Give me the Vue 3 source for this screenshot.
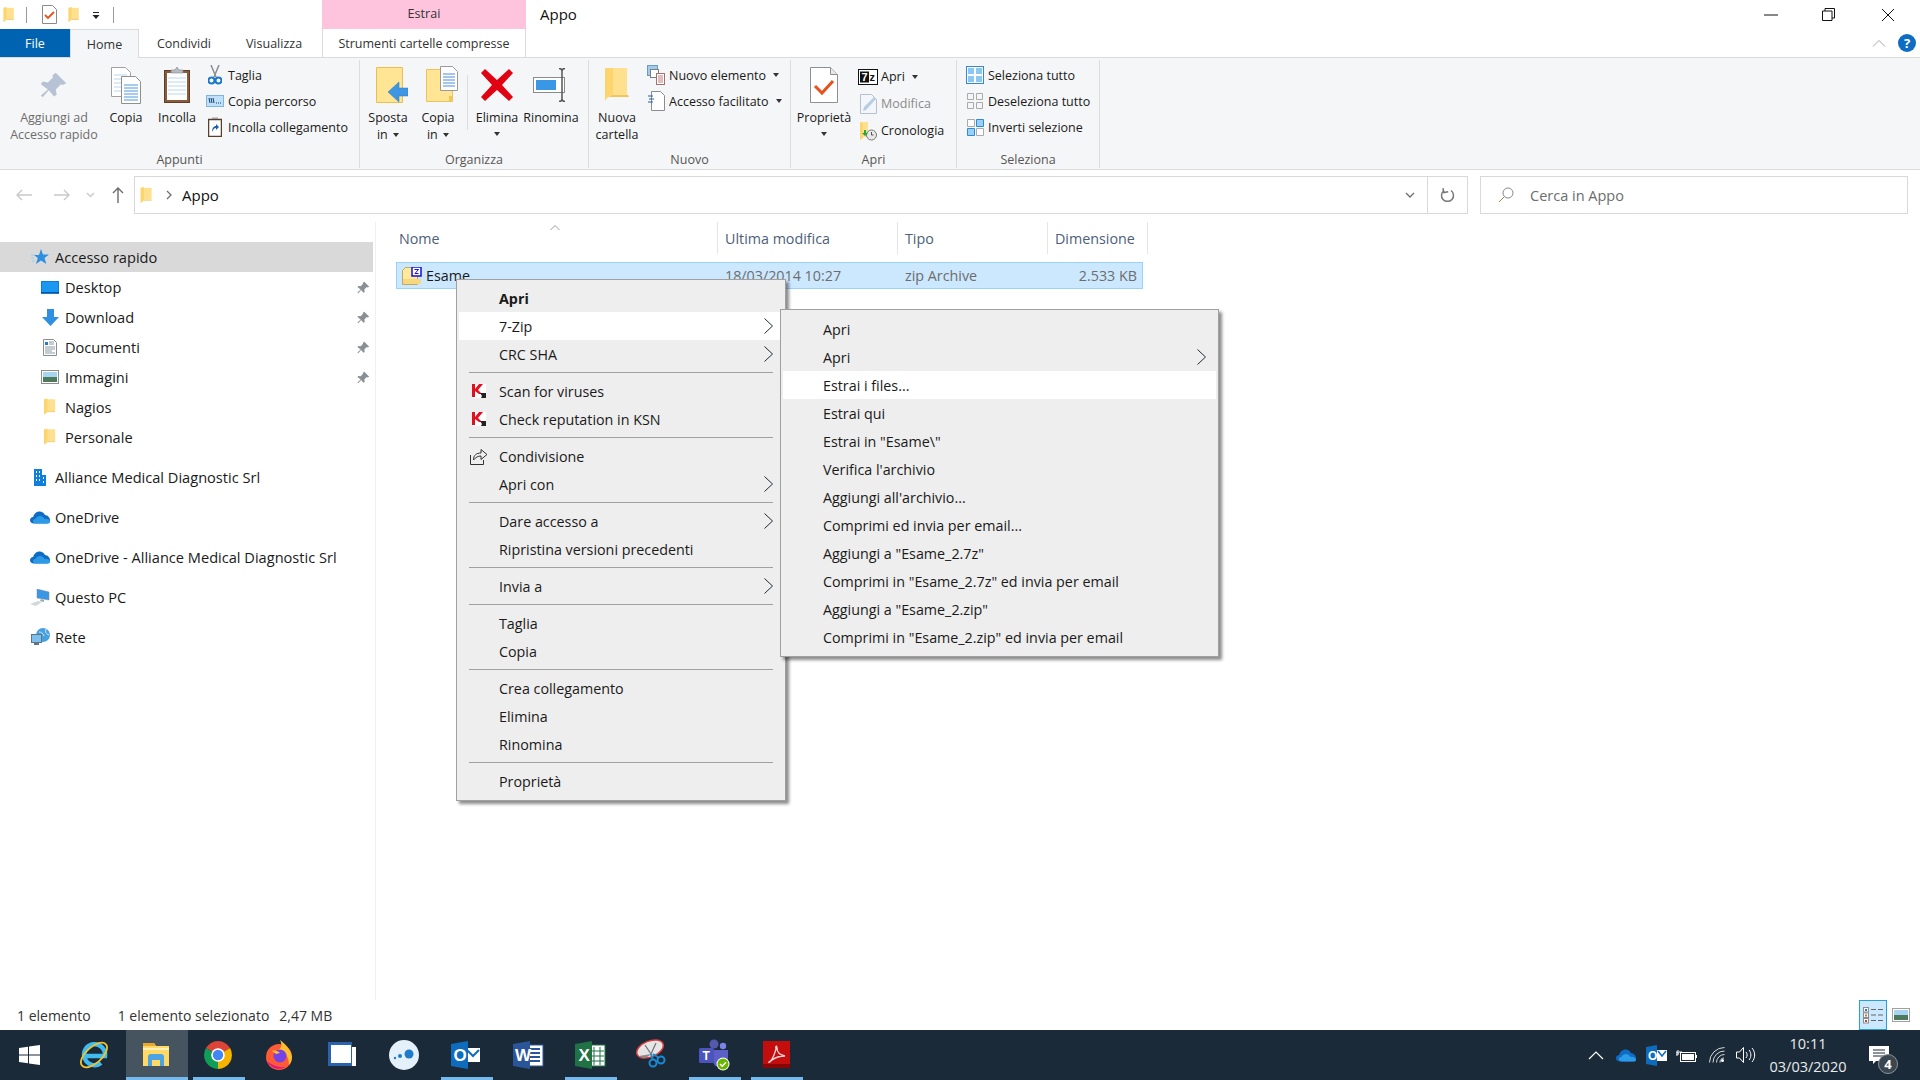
<template>
  <div class="page">
    <svg class="sprite" aria-hidden="true">
      <symbol id="i-folder" viewBox="0 0 14 20">
        <path d="M3 1h10v14H3z" fill="#ffe08f" />
        <path d="M0 1l4-1v16l-4 3z" fill="#fdd56e" />
        <path d="M4 16h9v-1H4z" fill="#f2c55c" />
      </symbol>
      <symbol id="i-pin" viewBox="0 0 16 16">
        <path d="M9 1l6 6-2 1-1-0.5-3 3 0.5 3-1.5 1-3-3.500-3.500 4-1-1 4-3.500L0.500 7.500l1-1.500 3 0.500 3-3L7 2.500z" fill="#8a8f96" />
      </symbol>
      <symbol id="i-chev" viewBox="0 0 9 16">
        <path d="M0.500 0.500L8.500 8L0.500 15.500" fill="none" stroke="#1f2a35" stroke-width="1" />
      </symbol>
      <symbol id="i-k" viewBox="0 0 14 14">
        <rect width="14" height="14" fill="#fff" />
        <path d="M0 0h3v5l4-5h4L6 6l4 4H7L3 7v6H0z" fill="#e2101e" />
        <path d="M8 9h6v5H9l1-2z" fill="#222" />
      </symbol>
      <symbol id="i-cloud" viewBox="0 0 20 13">
        <path d="M4 12.500C1.500 12.500 0 11 0 9.200 0 7.400 1.400 6 3.200 6 4 2.600 6.600 0.500 9.600 0.500c2.400 0 4.400 1.300 5.400 3.500C17.800 4.200 20 6.500 20 9.200c0 1.800-1.400 3.300-3.200 3.300z" fill="#0f6cc4" />
        <path d="M6 12.500c-2 0-3-1.200-3-2.400 0-1.400 1.100-2.400 2.600-2.400 0.900-1.700 2.500-2.700 4.300-2.700 2 0 3.700 1.100 4.500 2.900 2.500-0.300 5.600 0.800 5.600 2.900 0 0.900-0.600 1.700-1.600 1.700z" fill="#2b9be8" />
      </symbol>
      <symbol id="i-selgrid" viewBox="0 0 18 18">
        <rect x="0.500" y="0.500" width="17" height="17" fill="#fff" stroke="#2e8ad8" />
        <path d="M2 2h6v6H2zM10 2h6v6h-6zM2 10h6v6H2zM10 10h6v6h-6z" fill="#8cc7f3" />
      </symbol>
    </svg>

    <!-- title bar -->
    <header class="titlebar">
      <div class="qat">
        <svg class="qat-folder" width="12" height="16"><use href="#i-folder" /></svg>
        <span class="qat-sep"></span>
        <svg class="qat-doc" width="15" height="19" viewBox="0 0 15 19">
          <path d="M0.500 0.500h10l4 4v14H0.500z" fill="#fff" stroke="#8a8a8a" />
          <path d="M3 10l3 3 6-6" fill="none" stroke="#e8501c" stroke-width="1.800" />
        </svg>
        <svg class="qat-folder2" width="12" height="16"><use href="#i-folder" /></svg>
        <svg class="qat-drop" width="8" height="9" viewBox="0 0 8 9">
          <path d="M1 1h6v1H1zM0.500 4h7L4 8z" fill="#222" />
        </svg>
        <span class="qat-sep qat-sep-b"></span>
      </div>
      <div class="context-head">Estrai</div>
      <div class="win-title">Appo</div>
      <div class="win-controls">
        <button class="win-btn win-min">
          <svg width="14" height="2" viewBox="0 0 14 2"><path d="M0 1h14" stroke="#111" /></svg>
        </button>
        <button class="win-btn win-max">
          <svg width="13" height="13" viewBox="0 0 13 13">
            <path d="M3 3V0.500h9.500V10H10M0.500 3h9.500v9.500H0.500z" fill="none" stroke="#111" />
          </svg>
        </button>
        <button class="win-btn win-close">
          <svg width="14" height="14" viewBox="0 0 14 14"><path d="M1 1l12 12M13 1L1 13" stroke="#111" /></svg>
        </button>
      </div>
    </header>

    <!-- tabs -->
    <nav class="tabs">
      <div class="tab tab-file">File</div>
      <div class="tab tab-home">Home</div>
      <div class="tab tab-cond">Condividi</div>
      <div class="tab tab-vis">Visualizza</div>
      <div class="tab tab-tools">Strumenti cartelle compresse</div>
      <div class="tabs-right">
        <svg width="14" height="8" viewBox="0 0 14 8"><path d="M1 7.500l6-6 6 6" fill="none" stroke="#a6a6a6" /></svg>
        <span class="help">?</span>
      </div>
    </nav>

    <!-- ribbon -->
    <section class="ribbon">
      <div class="group group-appunti">
        <div class="group-body">
          <div class="big w-pin muted">
            <div class="big-icon">
              <svg width="28" height="28" viewBox="0 0 16 16"><path d="M9 1l6 6-2 1-1-0.500-3 3 0.500 3-1.500 1-3-3.500-3.500 4-1-1 4-3.500L0.500 7.500l1-1.500 3 0.500 3-3L7 2.500z" fill="#b7c3d4" /></svg>
            </div>
            <span>Aggiungi ad</span><span>Accesso rapido</span>
          </div>
          <div class="big w-copy">
            <div class="big-icon">
              <svg width="30" height="37" viewBox="0 0 30 37">
                <path d="M0.500 0.500h14l5 5v24H0.500z" fill="#fff" stroke="#a0a0a0" />
                <path d="M3 8h13M3 12h13M3 16h13M3 20h13M3 24h13" stroke="#b9d4f0" />
                <path d="M10.500 9.500h14l5 5v22h-19z" fill="#fff" stroke="#8f8f8f" />
                <path d="M13 18h14M13 21h14M13 24h14M13 27h14M13 30h14M13 33h14" stroke="#4d9ae0" />
              </svg>
            </div>
            <span>Copia</span>
          </div>
          <div class="big w-paste">
            <div class="big-icon">
              <svg width="26" height="36" viewBox="0 0 26 36">
                <rect x="0.500" y="3.500" width="25" height="32" fill="#8a5a3c" stroke="#5f3d28" />
                <rect x="3" y="6" width="20" height="27" fill="#fff" />
                <path d="M4 11h18M4 15h18M4 19h18M4 23h18M4 27h18" stroke="#bcd8f3" />
                <path d="M7 6V3h4l2-3 2 3h4v3z" fill="#b5bcc4" stroke="#7c8187" stroke-width="0.600" />
              </svg>
            </div>
            <span>Incolla</span>
          </div>
          <div class="small-col small-col-clip">
            <div class="small">
              <span class="s-icon">
                <svg width="14" height="20" viewBox="0 0 14 20">
                  <path d="M3 0l5 12M11 0L6 12" stroke="#8d8d8d" stroke-width="1.500" />
                  <circle cx="3.500" cy="15.500" r="3" fill="none" stroke="#1978c8" stroke-width="2" />
                  <circle cx="10.500" cy="15.500" r="3" fill="none" stroke="#1978c8" stroke-width="2" />
                </svg>
              </span>Taglia
            </div>
            <div class="small">
              <span class="s-icon">
                <svg width="18" height="12" viewBox="0 0 18 12">
                  <rect x="0.500" y="0.500" width="17" height="11" fill="#bfe0f8" stroke="#7fb5de" />
                  <path d="M3 3l1 5M5 3l1 5M7 3l1 5M10 8h1M12 8h1M14 8h1" stroke="#13406a" />
                </svg>
              </span>Copia percorso
            </div>
            <div class="small">
              <span class="s-icon">
                <svg width="14" height="20" viewBox="0 0 14 20">
                  <rect x="0.500" y="2.500" width="13" height="17" fill="#fff" stroke="#5a3e2c" stroke-width="1.500" />
                  <path d="M4 2V0.500h6V2z" fill="#9aa0a6" />
                  <path d="M4 15c0-4 2-6 4-6V7l3 3-3 3v-2c-2 0-3 2-4 4z" fill="#1e5fa8" />
                </svg>
              </span>Incolla collegamento
            </div>
          </div>
        </div>
        <div class="group-label">Appunti</div>
      </div>

      <div class="group group-org">
        <div class="group-body">
          <div class="big w-sposta">
            <div class="big-icon nudge">
              <svg width="32" height="36" viewBox="0 0 32 36">
                <path d="M0.500 0.500h26v35H0.500z" fill="#ffe594" stroke="#e9bf50" />
                <path d="M12 25L23 15v6h9v8h-9v6z" fill="#3f97e3" stroke="#2a78c0" stroke-width="0.500" />
              </svg>
            </div>
            <span>Sposta</span><span>in <i class="caret"></i></span>
          </div>
          <div class="big w-copyto">
            <div class="big-icon nudge">
              <svg width="33" height="38" viewBox="0 0 33 38">
                <path d="M0.500 3.500h26v32H0.500z" fill="#ffe594" stroke="#eac35c" />
                <path d="M23 30v6l4-2v-4z" fill="#f2c55c" />
                <path d="M14.500 0.500h12l5 5v19h-17z" fill="#fff" stroke="#9a9a9a" />
                <path d="M17 8h12M17 11h12M17 14h12M17 17h12M17 20h12" stroke="#4d8fd8" />
              </svg>
            </div>
            <span>Copia</span><span>in <i class="caret"></i></span>
          </div>
          <span class="vsep"></span>
          <div class="big w-del">
            <div class="big-icon">
              <svg width="32" height="32" viewBox="0 0 32 32">
                <path d="M4 0l12 11L28 0l4 4-11 12 11 12-4 4-12-11L4 32l-4-4 11-12L0 4z" fill="#e00412" />
              </svg>
            </div>
            <span>Elimina</span><i class="caret caret-solo"></i>
          </div>
          <div class="big w-ren">
            <div class="big-icon">
              <svg width="36" height="34" viewBox="0 0 36 34">
                <rect x="0.500" y="9.500" width="31" height="15" fill="#fff" stroke="#8a8a8a" />
                <rect x="3" y="12" width="20" height="10" fill="#3a97e6" />
                <path d="M26 0.500c2 0 3 1 3 2.500v28c0 1.500-1 2.500-3 2.500M32 0.500c-2 0-3 1-3 2.500v28c0 1.500 1 2.500 3 2.500" fill="none" stroke="#555" stroke-width="1.500" />
              </svg>
            </div>
            <span>Rinomina</span>
          </div>
        </div>
        <div class="group-label">Organizza</div>
      </div>

      <div class="group group-new">
        <div class="group-body">
          <div class="big w-newf">
            <div class="big-icon">
              <svg width="24" height="36" viewBox="0 0 24 36">
                <path d="M5 1h17v29H5z" fill="#ffe08f" />
                <path d="M0 1l8 0v27l-6 3-2 3z" fill="#fdd56e" />
                <path d="M8 28h15l1 2H4z" fill="#f2c55c" />
              </svg>
            </div>
            <span>Nuova</span><span>cartella</span>
          </div>
          <div class="small-col small-col-new">
            <div class="small">
              <span class="s-icon">
                <svg width="18" height="20" viewBox="0 0 18 20">
                  <rect x="0.500" y="0.500" width="10" height="10" fill="#9ecbee" stroke="#6f99bd" />
                  <rect x="3.500" y="4.500" width="8" height="8" fill="#fff" stroke="#7e7e7e" />
                  <rect x="9.500" y="8.500" width="8" height="11" fill="#fff" stroke="#a27070" />
                  <path d="M11 11h5M11 13h5M11 15h5M11 17h5" stroke="#c77a7a" />
                </svg>
              </span>Nuovo elemento <i class="caret caret-side"></i>
            </div>
            <div class="small">
              <span class="s-icon">
                <svg width="17" height="20" viewBox="0 0 17 20">
                  <path d="M3.500 0.500h9l4 4v15h-13z" fill="#fff" stroke="#8d8d8d" />
                  <path d="M0 5h5M1 8h5M0 11h5" stroke="#1e62b0" />
                </svg>
              </span>Accesso facilitato <i class="caret caret-side"></i>
            </div>
          </div>
        </div>
        <div class="group-label">Nuovo</div>
      </div>

      <div class="group group-open">
        <div class="group-body">
          <div class="big w-prop">
            <div class="big-icon">
              <svg width="28" height="36" viewBox="0 0 28 36">
                <path d="M0.500 0.500h20l7 7v28h-27z" fill="#fff" stroke="#8f8f8f" />
                <path d="M20.500 0.500v7h7" fill="#e8e8e8" stroke="#8f8f8f" />
                <path d="M5 19l7 7 11-12" fill="none" stroke="#e8501c" stroke-width="3" />
              </svg>
            </div>
            <span>Proprietà</span><i class="caret caret-solo"></i>
          </div>
          <div class="small-col small-col-wide">
            <div class="small">
              <span class="s-icon">
                <svg width="20" height="16" viewBox="0 0 20 16">
                  <rect x="0.500" y="0.500" width="19" height="15" fill="#fff" stroke="#111" />
                  <rect x="2" y="2.500" width="9" height="11" fill="#111" />
                  <text x="3.500" y="11.500" class="svg-7z" fill="#fff">7</text>
                  <text x="11.500" y="12" class="svg-7z" fill="#111">z</text>
                </svg>
              </span>Apri <i class="caret caret-side"></i>
            </div>
            <div class="small muted">
              <span class="s-icon">
                <svg width="17" height="20" viewBox="0 0 17 20">
                  <path d="M0.500 0.500h11l5 5v14H0.500z" fill="#f3f6fa" stroke="#b7c0cc" />
                  <path d="M3 17l1-4L14 3l2 2L6 16z" fill="#b7cde6" />
                </svg>
              </span>Modifica
            </div>
            <div class="small">
              <span class="s-icon">
                <svg width="17" height="20" viewBox="0 0 17 20">
                  <path d="M0 1h8v15H0z" fill="#ffe08f" />
                  <path d="M0 1l3 1v15l-3 2z" fill="#fdd56e" />
                  <circle cx="11.500" cy="14" r="5" fill="#e8e8e8" stroke="#777" />
                  <path d="M11.500 11v3h2" fill="none" stroke="#555" />
                  <path d="M2 12l3 3 3-3H6V9H4v3z" fill="#25a83a" />
                </svg>
              </span>Cronologia
            </div>
          </div>
        </div>
        <div class="group-label">Apri</div>
      </div>

      <div class="group group-sel">
        <div class="group-body">
          <div class="small-col">
            <div class="small">
              <span class="s-icon"><svg width="18" height="18"><use href="#i-selgrid" /></svg></span>Seleziona tutto
            </div>
            <div class="small">
              <span class="s-icon">
                <svg width="16" height="16" viewBox="0 0 16 16">
                  <path d="M0.500 0.500h6v6h-6zM9.500 0.500h6v6h-6zM0.500 9.500h6v6h-6zM9.500 9.500h6v6h-6z" fill="none" stroke="#aaa" />
                </svg>
              </span>Deseleziona tutto
            </div>
            <div class="small">
              <span class="s-icon">
                <svg width="17" height="17" viewBox="0 0 17 17">
                  <path d="M0.500 0.500h7v7h-7zM9.500 9.500h7v7h-7z" fill="#fff" stroke="#aaa" />
                  <path d="M9.500 0.500h7v7h-7zM0.500 9.500h7v7h-7z" fill="#9bd0f5" stroke="#2e8ad8" />
                </svg>
              </span>Inverti selezione
            </div>
          </div>
        </div>
        <div class="group-label">Seleziona</div>
      </div>
    </section>

    <!-- address bar -->
    <div class="addressrow">
      <div class="nav-btns">
        <svg class="n-back" width="16" height="12" viewBox="0 0 16 12"><path d="M6 1L1 6l5 5M1 6h15" fill="none" stroke="#c9c9c9" stroke-width="1.400" /></svg>
        <svg class="n-fwd" width="16" height="12" viewBox="0 0 16 12"><path d="M10 1l5 5-5 5M15 6H0" fill="none" stroke="#c9c9c9" stroke-width="1.400" /></svg>
        <svg class="n-down" width="9" height="6" viewBox="0 0 9 6"><path d="M1 1l3.500 3.500L8 1" fill="none" stroke="#c9c9c9" stroke-width="1.400" /></svg>
        <svg class="n-up" width="12" height="16" viewBox="0 0 12 16"><path d="M1 6l5-5 5 5M6 1v15" fill="none" stroke="#6b6b6b" stroke-width="1.400" /></svg>
      </div>
      <div class="addressbox">
        <svg class="addr-folder" width="13" height="17"><use href="#i-folder" /></svg>
        <svg class="addr-chev" width="6" height="10" viewBox="0 0 6 10"><path d="M1 1l4 4-4 4" fill="none" stroke="#6e6e6e" stroke-width="1.300" /></svg>
        <span class="addr-text">Appo</span>
        <svg class="addr-drop" width="10" height="6" viewBox="0 0 10 6"><path d="M1 1l4 4 4-4" fill="none" stroke="#6e6e6e" stroke-width="1.300" /></svg>
        <span class="addr-refresh">
          <svg width="15" height="15" viewBox="0 0 15 15">
            <path d="M4 2.500A6 6 0 1 0 11 2.500" fill="none" stroke="#777" stroke-width="1.500" />
            <path d="M3.500 0v4.500H8" fill="none" stroke="#777" stroke-width="1.500" transform="rotate(-10 4 3)" />
          </svg>
        </span>
      </div>
      <div class="searchbox">
        <svg width="16" height="16" viewBox="0 0 16 16">
          <circle cx="10" cy="6" r="5" fill="none" stroke="#8a8a8a" />
          <path d="M6.500 9.500L1 15" stroke="#b57a4a" />
        </svg>
        <span>Cerca in Appo</span>
      </div>
    </div>

    <!-- main -->
    <main class="main">
      <aside class="sidebar">
        <div
          v-for="item in navItems"
          :key="item.label"
          class="nav-row"
          :class="{ 'nav-sel': item.selected, 'nav-sub': item.sub, 'nav-gap': item.gap }"
        >
          <span class="nav-icon">
            <svg v-if="item.icon === 'star'" width="18" height="16" viewBox="0 0 18 16">
              <path d="M10 0l2 5.500h6l-4.500 3.500 1.800 6L10 11.500 5 15l1.800-6L3 6h5z" fill="#2c8fe0" />
              <path d="M0 6h4M0 9h3M1 12h3" stroke="#9fcdf0" />
            </svg>
            <svg v-else-if="item.icon === 'desktop'" width="18" height="13" viewBox="0 0 18 13">
              <rect width="18" height="13" fill="#0f7fdc" />
              <path d="M1 1h16v10H1z" fill="#1a97f0" />
              <path d="M0 11.500h18" stroke="#0a4f96" />
            </svg>
            <svg v-else-if="item.icon === 'download'" width="17" height="17" viewBox="0 0 17 17">
              <path d="M5 0h7v8h5l-8.500 9L0 8h5z" fill="#2f8fe0" />
            </svg>
            <svg v-else-if="item.icon === 'doc'" width="14" height="17" viewBox="0 0 14 17">
              <path d="M0.500 0.500h10l3 3v13H0.500z" fill="#fff" stroke="#8d8d8d" />
              <path d="M2 3h3v3H2z" fill="#2a78c8" />
              <path d="M6 3h5M6 5h5M2 8h10M2 10h10M2 12h7M2 14h10" stroke="#8899aa" />
            </svg>
            <svg v-else-if="item.icon === 'image'" width="18" height="14" viewBox="0 0 18 14">
              <rect x="0.500" y="0.500" width="17" height="13" fill="#fff" stroke="#8d8d8d" />
              <rect x="2" y="2" width="14" height="5" fill="#a6d4f2" />
              <rect x="2" y="7" width="14" height="5" fill="#4d7a5a" />
            </svg>
            <svg v-else-if="item.icon === 'folder'" width="12" height="18"><use href="#i-folder" /></svg>
            <svg v-else-if="item.icon === 'building'" width="12" height="17" viewBox="0 0 12 17">
              <path d="M0 0h8v17H0zM8 6h4v11H8z" fill="#0f7fdc" />
              <path d="M2 2h1v2H2zM5 2h1v2H5zM2 6h1v2H2zM5 6h1v2H5zM2 10h1v2H2zM5 10h1v2H5zM9 8h1v2H9zM9 12h1v2H9z" fill="#fff" />
            </svg>
            <svg v-else-if="item.icon === 'cloud'" width="20" height="13"><use href="#i-cloud" /></svg>
            <svg v-else-if="item.icon === 'pc'" width="20" height="17" viewBox="0 0 20 17">
              <path d="M7 0l12 3v8L7 9z" fill="#3a97e6" stroke="#7a8a99" stroke-width="0.500" />
              <path d="M11 10l-1 2 4 1v-2z" fill="#9aa" />
              <path d="M0 15l8-3 4 1-6 4z" fill="#d4d7da" />
            </svg>
            <svg v-else-if="item.icon === 'net'" width="19" height="18" viewBox="0 0 19 18">
              <circle cx="12" cy="7" r="7" fill="#49a0e0" />
              <path d="M8 4c2 0 4 1 5 4M15 1c-1 3 0 5 3 6" fill="none" stroke="#cfe8fa" />
              <rect x="0.500" y="6.500" width="10" height="8" fill="#7cc0ee" stroke="#5f7587" />
              <path d="M3 16h5" stroke="#5f7587" stroke-width="2" />
            </svg>
          </span>
          <span class="nav-label">{{ item.label }}</span>
          <svg v-if="item.pinned" class="nav-pin" width="13" height="13"><use href="#i-pin" /></svg>
        </div>
      </aside>

      <div class="pane">
        <svg class="sort-caret" width="10" height="5" viewBox="0 0 10 5"><path d="M0.500 5L5 0.500 9.500 5" fill="none" stroke="#9a9a9a" /></svg>
        <div class="col-head">
          <div class="col col-name">Nome</div>
          <div class="col col-date">Ultima modifica</div>
          <div class="col col-type">Tipo</div>
          <div class="col col-size">Dimensione</div>
        </div>
        <div class="file-row">
          <div class="cell-name">
            <svg width="20" height="18" viewBox="0 0 20 18">
              <path d="M0.500 3.500l3-3h12v17H0.500z" fill="#ffe99a" stroke="#b9a96a" />
              <path d="M1 12h18v5H1z" fill="#f9d77e" />
              <rect x="10" y="0" width="9" height="9" fill="#fff" stroke="#1111dd" stroke-width="1.500" />
              <path d="M12.500 2.500h4L13 6.500h3.500" fill="none" stroke="#1111dd" />
            </svg>
            <span>Esame</span>
          </div>
          <div class="cell cell-date">18/03/2014 10:27</div>
          <div class="cell cell-type">zip Archive</div>
          <div class="cell cell-size">2.533 KB</div>
        </div>
      </div>
    </main>

    <!-- status bar -->
    <footer class="status">
      <span class="st st-count">1 elemento</span>
      <span class="st st-sel">1 elemento selezionato</span>
      <span class="st st-mb">2,47 MB</span>
      <div class="view-btns">
        <span class="view-btn view-on">
          <svg width="21" height="17" viewBox="0 0 21 17">
            <rect x="0.500" y="0.500" width="5" height="4.500" fill="#fff" stroke="#8d8d8d" />
            <rect x="0.500" y="6" width="5" height="4.500" fill="#fff" stroke="#8d8d8d" />
            <rect x="0.500" y="11.500" width="5" height="4.500" fill="#fff" stroke="#8d8d8d" />
            <path d="M2 2h2v2H2z" fill="#2a78c8" /><path d="M2 7.500h2v2H2z" fill="#9a8a2a" /><path d="M2 13h2v2H2z" fill="#b84a2a" />
            <path d="M8 2.500h5M15 2.500h5M8 8h5M15 8h5M8 13.500h5M15 13.500h5" stroke="#666" />
          </svg>
        </span>
        <span class="view-btn">
          <svg width="18" height="14" viewBox="0 0 18 14">
            <rect x="0.500" y="0.500" width="17" height="13" fill="#fff" stroke="#a0a0a0" />
            <rect x="2" y="2" width="14" height="5" fill="#a6d4f2" />
            <rect x="2" y="7" width="14" height="5" fill="#4d7a5a" />
          </svg>
        </span>
      </div>
    </footer>

    <!-- taskbar -->
    <div class="taskbar">
      <div class="start">
        <svg width="21" height="20" viewBox="0 0 21 20">
          <path d="M0 3l9-1.300V9.500H0zM10 1.500L21 0v9.500H10zM0 10.500h9v7.800L0 17zM10 10.500h11V20l-11-1.500z" fill="#fff" />
        </svg>
      </div>
      <div
        v-for="app in apps"
        :key="app.id"
        class="task-btn"
        :class="{ 'task-on': app.running, 'task-active': app.active }"
      >
        <svg width="32" height="32" viewBox="0 0 32 32">
          <template v-if="app.id === 'ie'">
            <path d="M5 17h22A10.500 10.500 0 1 0 23 24" fill="none" stroke="#3fbcef" stroke-width="4.500" />
            <ellipse cx="16" cy="16" rx="16" ry="8" fill="none" stroke="#f2c230" stroke-width="1.800" transform="rotate(-42 16 16)" />
          </template>
          <template v-else-if="app.id === 'explorer'">
            <path d="M3 4h11l2 3h13v20H3z" fill="#ffd966" />
            <path d="M3 4h11l2 3H3z" fill="#e8a92e" />
            <path d="M3 9h26v2H3z" fill="#fff0b8" />
            <path d="M8 27V18a3 3 0 0 1 3-3h10a3 3 0 0 1 3 3v9h-4v-6h-8v6z" fill="#4ba3e3" />
          </template>
          <template v-else-if="app.id === 'chrome'">
            <path d="M16 16L3.900 9A14 14 0 0 1 28.100 9z" fill="#db4437" />
            <path d="M16 16L28.100 9A14 14 0 0 1 16 30z" fill="#f4b400" />
            <path d="M16 16L16 30A14 14 0 0 1 3.900 9z" fill="#0f9d58" />
            <circle cx="16" cy="16" r="6.800" fill="#fff" />
            <circle cx="16" cy="16" r="5.200" fill="#4285f4" />
          </template>
          <template v-else-if="app.id === 'firefox'">
            <circle cx="15" cy="18" r="13" fill="#ff5a35" />
            <path d="M16 1c5 4 11 9 12 17 0 4-2 7-3 8 0-9-5-14-11-15 4-2 4-6 2-10z" fill="#ffbd2e" />
            <path d="M3 22c3 7 12 10 19 6-4 1-12 0-19-6z" fill="#e31587" />
            <circle cx="16" cy="17" r="6.500" fill="#7542e5" />
            <path d="M8 12c3-1 6 0 8 2l-4 1z" fill="#ffbd2e" />
          </template>
          <template v-else-if="app.id === 'vm'">
            <path d="M2 3h24v5h4v19H2z" fill="#fff" />
            <path d="M2 3h24v24H2z" fill="#2a62ad" />
            <path d="M26 8h4v19h-4z" fill="#fff" />
            <rect x="5" y="6" width="20" height="18" fill="#fff" />
          </template>
          <template v-else-if="app.id === 'circle'">
            <circle cx="16" cy="16" r="15" fill="#e4f1fa" />
            <circle cx="21" cy="15" r="4.500" fill="#1e7cc8" />
            <circle cx="12" cy="17" r="2" fill="#1e7cc8" />
            <circle cx="7" cy="19" r="1.200" fill="#1e7cc8" />
          </template>
          <template v-else-if="app.id === 'outlook'">
            <path d="M15 9h15v14H15z" fill="#fff" />
            <path d="M17 11l6 6 6-6" fill="none" stroke="#0f6cbd" stroke-width="2" />
            <path d="M1 5l17-3v28L1 27z" fill="#0f6cbd" />
            <text x="3.500" y="22" class="svg-app">O</text>
          </template>
          <template v-else-if="app.id === 'word'">
            <rect x="14" y="6" width="17" height="21" fill="#fff" stroke="#2a5699" />
            <path d="M18 10h10M18 14h10M18 18h10M18 22h10" stroke="#2a5699" stroke-width="2" />
            <path d="M1 5l17-3v28L1 27z" fill="#2a5699" />
            <text x="3" y="22" class="svg-app">W</text>
          </template>
          <template v-else-if="app.id === 'excel'">
            <rect x="14" y="6" width="17" height="21" fill="#fff" stroke="#207245" />
            <path d="M20 8v18M26 8v18M16 12h14M16 17h14M16 22h14" stroke="#207245" />
            <path d="M1 5l17-3v28L1 27z" fill="#207245" />
            <text x="4.500" y="22" class="svg-app">X</text>
          </template>
          <template v-else-if="app.id === 'snip'">
            <ellipse cx="14" cy="10" rx="14" ry="8" fill="#e6e6e6" stroke="#d83b3b" stroke-width="1.500" transform="rotate(-22 14 10)" />
            <path d="M9 6l6 9M20 4L15 15" stroke="#777" stroke-width="1.300" />
            <path d="M3 17c3 3 9 2 12-2" fill="#8a8a8a" />
            <circle cx="17" cy="24" r="3.500" fill="none" stroke="#1a8ad4" stroke-width="2" />
            <circle cx="25" cy="21" r="3.500" fill="none" stroke="#1a8ad4" stroke-width="2" />
            <path d="M15 15l2 6M17 15l6 4" stroke="#1a8ad4" stroke-width="2" />
          </template>
          <template v-else-if="app.id === 'teams'">
            <circle cx="16" cy="5" r="4.500" fill="#5558af" />
            <circle cx="25" cy="7" r="3.200" fill="#7b83eb" />
            <path d="M15 11h15v11a6 6 0 0 1-6 6h-3a6 6 0 0 1-6-6z" fill="#5b5fc7" />
            <rect x="1" y="9" width="15" height="15" rx="1.500" fill="#4b53bc" />
            <text x="4.500" y="21" class="svg-team">T</text>
            <circle cx="25" cy="25" r="6.500" fill="#fff" />
            <circle cx="25" cy="25" r="5.500" fill="#6bb700" />
            <path d="M22 25l2.200 2.200 3.800-4" fill="none" stroke="#fff" stroke-width="1.500" />
          </template>
          <template v-else-if="app.id === 'acrobat'">
            <rect x="3" y="2" width="27" height="27" fill="#c40d0d" />
            <path d="M3 25h27v4H3z" fill="#8a0505" />
            <path d="M9 23c3-1 5-6 7-13-1-3 1-4 1-1 0 4 3 7 8 8-4 0-9 1-13 4-2 2-4 3-3 2z" fill="none" stroke="#f3d6d6" stroke-width="1.300" />
          </template>
        </svg>
      </div>

      <div class="tray">
        <svg class="tr-chev" width="16" height="9" viewBox="0 0 16 9"><path d="M1 8l7-7 7 7" fill="none" stroke="#fff" stroke-width="1.200" /></svg>
        <svg class="tr-cloud" width="20" height="13"><use href="#i-cloud" /></svg>
        <svg class="tr-ol" width="21" height="21" viewBox="0 0 21 21">
          <path d="M11 5h10v11H11z" fill="#fff" />
          <path d="M12 6l4 5 4-5" fill="none" stroke="#0f6cbd" stroke-width="1.500" />
          <path d="M0 2l11-2v21L0 19z" fill="#0f6cbd" />
          <text x="2" y="14.500" class="svg-tray">O</text>
        </svg>
        <svg class="tr-bat" width="21" height="13" viewBox="0 0 21 13">
          <path d="M0 3h2v3H0zM2 1v4M3 3h3" stroke="#fff" fill="none" />
          <rect x="4.500" y="3.500" width="15" height="9" fill="none" stroke="#fff" />
          <rect x="6" y="5" width="12" height="6" fill="#fff" />
          <rect x="20" y="6" width="1" height="3" fill="#fff" />
        </svg>
        <svg class="tr-wifi" width="16" height="16" viewBox="0 0 16 16">
          <path d="M0.500 15.500A15 15 0 0 1 15.500 0.500M4 15.500A11.500 11.500 0 0 1 15.500 4M7.500 15.500A8 8 0 0 1 15.500 7.500M11 15.500A4.500 4.500 0 0 1 15 11" fill="none" stroke="#d6d9dc" />
          <circle cx="13.500" cy="13.500" r="1.500" fill="#fff" />
        </svg>
        <svg class="tr-vol" width="21" height="16" viewBox="0 0 21 16">
          <path d="M0.500 5h3l4-4.500v15l-4-4.500h-3z" fill="none" stroke="#fff" />
          <path d="M10 5c1.500 2 1.500 4 0 6M13 3c2.500 3 2.500 7 0 10M16 1c3.500 4 3.500 10 0 14" fill="none" stroke="#fff" />
        </svg>
        <div class="clock">
          <span>10:11</span>
          <span>03/03/2020</span>
        </div>
        <div class="notif">
          <svg width="20" height="18" viewBox="0 0 20 18">
            <path d="M0 0h20v15H7l-3 3v-3H0z" fill="#fff" />
            <path d="M4 4h12M4 7h12M4 10h12" stroke="#1b2a38" />
          </svg>
          <span class="notif-badge">4</span>
        </div>
      </div>
    </div>

    <!-- context menu -->
    <div class="menu menu-main">
      <template v-for="(item, i) in mainMenu" :key="i">
        <div v-if="item.sep" class="menu-sep"></div>
        <div v-else class="menu-item" :class="{ 'menu-bold': item.bold, 'menu-hot': item.hot }">
          <span class="menu-icon">
            <svg v-if="item.icon === 'k'" width="14" height="14"><use href="#i-k" /></svg>
            <svg v-else-if="item.icon === 'share'" width="18" height="17" viewBox="0 0 18 17">
              <path d="M0.500 7v9.500h13V12" fill="none" stroke="#333" />
              <path d="M3.500 12c0-5 3-7 7.500-7V1.500l6 5-6 5V8c-3 0-5 1-7.500 4z" fill="none" stroke="#333" />
            </svg>
          </span>
          <span class="menu-text">{{ item.label }}</span>
          <svg v-if="item.sub" class="menu-chev" width="9" height="16"><use href="#i-chev" /></svg>
        </div>
      </template>
    </div>

    <div class="menu menu-zip">
      <div v-for="(item, i) in zipMenu" :key="i" class="menu-item" :class="{ 'menu-hot': item.hot }">
        <span class="menu-icon"></span>
        <span class="menu-text">{{ item.label }}</span>
        <svg v-if="item.sub" class="menu-chev" width="9" height="16"><use href="#i-chev" /></svg>
      </div>
    </div>
  </div>
</template>

<script setup>
const navItems = [
  { label: 'Accesso rapido', icon: 'star', selected: true },
  { label: 'Desktop', icon: 'desktop', sub: true, pinned: true },
  { label: 'Download', icon: 'download', sub: true, pinned: true },
  { label: 'Documenti', icon: 'doc', sub: true, pinned: true },
  { label: 'Immagini', icon: 'image', sub: true, pinned: true },
  { label: 'Nagios', icon: 'folder', sub: true },
  { label: 'Personale', icon: 'folder', sub: true },
  { label: 'Alliance Medical Diagnostic Srl', icon: 'building', gap: true },
  { label: 'OneDrive', icon: 'cloud', gap: true },
  { label: 'OneDrive - Alliance Medical Diagnostic Srl', icon: 'cloud', gap: true },
  { label: 'Questo PC', icon: 'pc', gap: true },
  { label: 'Rete', icon: 'net', gap: true },
]

const apps = [
  { id: 'ie' },
  { id: 'explorer', running: true, active: true },
  { id: 'chrome', running: true },
  { id: 'firefox' },
  { id: 'vm' },
  { id: 'circle' },
  { id: 'outlook', running: true },
  { id: 'word' },
  { id: 'excel', running: true },
  { id: 'snip' },
  { id: 'teams', running: true },
  { id: 'acrobat', running: true },
]

const mainMenu = [
  { label: 'Apri', bold: true },
  { label: '7-Zip', sub: true, hot: true },
  { label: 'CRC SHA', sub: true },
  { sep: true },
  { label: 'Scan for viruses', icon: 'k' },
  { label: 'Check reputation in KSN', icon: 'k' },
  { sep: true },
  { label: 'Condivisione', icon: 'share' },
  { label: 'Apri con', sub: true },
  { sep: true },
  { label: 'Dare accesso a', sub: true },
  { label: 'Ripristina versioni precedenti' },
  { sep: true },
  { label: 'Invia a', sub: true },
  { sep: true },
  { label: 'Taglia' },
  { label: 'Copia' },
  { sep: true },
  { label: 'Crea collegamento' },
  { label: 'Elimina' },
  { label: 'Rinomina' },
  { sep: true },
  { label: 'Proprietà' },
]

const zipMenu = [
  { label: 'Apri' },
  { label: 'Apri', sub: true },
  { label: 'Estrai i files...', hot: true },
  { label: 'Estrai qui' },
  { label: 'Estrai in "Esame\\"' },
  { label: "Verifica l'archivio" },
  { label: "Aggiungi all'archivio..." },
  { label: 'Comprimi ed invia per email...' },
  { label: 'Aggiungi a "Esame_2.7z"' },
  { label: 'Comprimi in "Esame_2.7z" ed invia per email' },
  { label: 'Aggiungi a "Esame_2.zip"' },
  { label: 'Comprimi in "Esame_2.zip" ed invia per email' },
]
</script>

<style>
html,
body {
  margin: 0;
  background: #fff;
}
</style>

<style scoped>
.page {
  position: relative;
  width: 1920px;
  height: 1080px;
  overflow: hidden;
  display: flex;
  flex-direction: column;
  background: #fff;
  color: #1a1a1a;
  font-family: "Open Sans", "Noto Sans", sans-serif;
  font-size: 14px;
  line-height: 17px;
}

.sprite {
  position: absolute;
  width: 0;
  height: 0;
}

svg {
  display: block;
  flex-shrink: 0;
}

.svg-7z {
  font: bold 11px "Liberation Sans", sans-serif;
}

.svg-app {
  font: bold 17px "Liberation Sans", sans-serif;
  fill: #fff;
}

.svg-team {
  font: bold 12px "Liberation Sans", sans-serif;
  fill: #fff;
}

.svg-tray {
  font: bold 12px "Liberation Sans", sans-serif;
  fill: #fff;
}

/* title bar */
.titlebar {
  display: flex;
  height: 29px;
  flex-shrink: 0;
}

.qat {
  width: 322px;
  display: flex;
  align-items: center;
  flex-shrink: 0;
}

.qat-folder {
  margin-left: 3px;
}

.qat-sep {
  width: 1px;
  height: 16px;
  background: #9a9a9a;
  margin-left: 11px;
}

.qat-doc {
  margin-left: 15px;
}

.qat-folder2 {
  margin-left: 11px;
}

.qat-drop {
  margin-left: 12px;
  margin-top: 2px;
}

.qat-sep-b {
  margin-left: 13px;
}

.context-head {
  width: 204px;
  flex-shrink: 0;
  background: #ffc4dd;
  text-align: center;
  line-height: 27px;
  font-size: 12.600px;
  color: #333;
}

.win-title {
  margin-left: 14px;
  font-size: 15px;
  line-height: 29px;
  color: #111;
}

.win-controls {
  margin-left: auto;
  display: flex;
}

.win-btn {
  background: none;
  border: none;
  padding: 0;
  height: 29px;
  display: flex;
  align-items: center;
  justify-content: center;
}

.win-min {
  width: 58px;
}

.win-max {
  width: 56px;
}

.win-close {
  width: 64px;
}

/* tabs */
.tabs {
  display: flex;
  height: 28px;
  flex-shrink: 0;
  position: relative;
  z-index: 1;
}

.tab {
  display: flex;
  align-items: center;
  justify-content: center;
  font-size: 12.500px;
  color: #333;
  box-sizing: border-box;
}

.tab-file {
  width: 70px;
  background: #0063b1;
  color: #fff;
}

.tab-home {
  width: 69px;
  height: 29px;
  background: #f5f6f7;
  border: 1px solid #dadbdc;
  border-bottom: none;
}

.tab-cond {
  width: 90px;
}

.tab-vis {
  width: 90px;
}

.tab-tools {
  width: 204px;
  border-left: 1px solid #dadbdc;
  border-right: 1px solid #dadbdc;
  margin-left: 3px;
}

.tabs-right {
  margin-left: auto;
  display: flex;
  align-items: center;
  gap: 12px;
  padding-right: 4px;
}

.help {
  width: 18px;
  height: 18px;
  border-radius: 50%;
  background: #0f6cc4;
  color: #fff;
  font-weight: 700;
  font-size: 13px;
  text-align: center;
  line-height: 18px;
}

/* ribbon */
.ribbon {
  display: flex;
  height: 113px;
  flex-shrink: 0;
  box-sizing: border-box;
  background: #f5f6f7;
  border-top: 1px solid #dadbdc;
  border-bottom: 1px solid #dadbdc;
  font-size: 12.500px;
}

.group {
  display: flex;
  flex-direction: column;
  box-sizing: border-box;
  margin: 2px 0 1px;
  border-right: 1px solid #dcdddf;
}

.group-appunti {
  width: 360px;
}

.group-org {
  width: 229px;
}

.group-new {
  width: 202px;
}

.group-open {
  width: 166px;
}

.group-sel {
  width: 143px;
}

.group-body {
  flex: 1;
  display: flex;
  min-height: 0;
}

.group-label {
  text-align: center;
  color: #555;
  font-size: 12.500px;
  line-height: 17px;
}

.big {
  display: flex;
  flex-direction: column;
  align-items: center;
  padding-top: 6px;
  flex-shrink: 0;
}

.big-icon {
  height: 43px;
  display: flex;
  align-items: center;
  justify-content: center;
  padding-bottom: 5px;
  box-sizing: border-box;
}

.nudge {
  margin-left: 8px;
}

.muted {
  color: #8a8a8a;
}

.big.muted {
  color: #6d6d6d;
}

.w-pin {
  width: 96px;
  margin-left: 6px;
}

.w-copy {
  width: 48px;
}

.w-paste {
  width: 54px;
}

.w-sposta {
  width: 52px;
  margin-left: 2px;
}

.w-copyto {
  width: 48px;
}

.vsep {
  width: 1px;
  height: 55px;
  background: #dcdddf;
  margin: 15px 4px 0 5px;
}

.w-del {
  width: 50px;
}

.w-ren {
  width: 58px;
}

.w-newf {
  width: 56px;
}

.w-prop {
  width: 66px;
}

.caret {
  display: inline-block;
  width: 0;
  height: 0;
  border-left: 3.500px solid transparent;
  border-right: 3.500px solid transparent;
  border-top: 4px solid #333;
  vertical-align: 2px;
  margin-left: 2px;
}

.caret-solo {
  margin: 6px 0 0;
}

.caret-side {
  margin-left: 4px;
  vertical-align: 3px;
}

.small-col {
  padding-top: 2px;
  margin-left: 1px;
}

.small-col-clip {
  margin-left: 0;
}

.small-col-new {
  margin-left: 0;
}

.small-col-wide {
  margin-left: 0;
  padding-top: 3px;
}

.small-col-wide .small {
  height: 27px;
}

.small {
  display: flex;
  align-items: center;
  height: 26px;
  white-space: pre;
}

.caret-side {
  align-self: center;
}

.s-icon {
  width: 22px;
  display: flex;
  justify-content: center;
  margin-right: 2px;
}

.group-sel .small-col {
  margin-left: 7px;
}

/* address row */
.addressrow {
  display: flex;
  height: 52px;
  flex-shrink: 0;
  box-sizing: border-box;
  padding-top: 6px;
}

.nav-btns {
  width: 134px;
  height: 38px;
  flex-shrink: 0;
  display: flex;
  align-items: center;
}

.n-back {
  margin-left: 16px;
}

.n-fwd {
  margin-left: 22px;
}

.n-down {
  margin-left: 16px;
}

.n-up {
  margin-left: 17px;
}

.addressbox {
  width: 1334px;
  height: 38px;
  box-sizing: border-box;
  border: 1px solid #d9d9d9;
  display: flex;
  align-items: center;
}

.addr-folder {
  margin-left: 5px;
}

.addr-chev {
  margin-left: 13px;
}

.addr-text {
  margin-left: 10px;
  font-size: 15px;
  color: #111;
}

.addr-drop {
  margin-left: auto;
  margin-right: 12px;
}

.addr-refresh {
  width: 39px;
  height: 36px;
  border-left: 1px solid #d9d9d9;
  display: flex;
  align-items: center;
  justify-content: center;
}

.searchbox {
  margin-left: 12px;
  width: 428px;
  height: 38px;
  box-sizing: border-box;
  border: 1px solid #d9d9d9;
  display: flex;
  align-items: center;
  padding-left: 17px;
  color: #6d6d6d;
  font-size: 14.500px;
}

.searchbox span {
  margin-left: 16px;
}

/* main */
.main {
  flex: 1;
  display: flex;
  min-height: 0;
}

.sidebar {
  width: 376px;
  flex-shrink: 0;
  box-sizing: border-box;
  padding: 20px 2px 0 0;
  border-right: 1px solid #f0f0f0;
}

.nav-row {
  display: flex;
  align-items: center;
  height: 30px;
  padding-left: 30px;
  font-size: 14.600px;
}

.nav-gap {
  margin-top: 10px;
}

.nav-sub {
  padding-left: 40px;
}

.nav-sel {
  background: #d9d9d9;
}

.nav-icon {
  width: 20px;
  display: flex;
  justify-content: center;
  margin-right: 5px;
}

.nav-pin {
  margin-left: auto;
  margin-right: 3px;
}

.pane {
  position: relative;
  padding-left: 20px;
  color: #1a1a1a;
}

.sort-caret {
  position: absolute;
  left: 174px;
  top: 3px;
}

.col-head {
  display: grid;
  grid-template-columns: 322px 180px 150px 100px;
  height: 32px;
}

.col {
  border-right: 1px solid #e5e5e5;
  padding-left: 7px;
  padding-top: 8px;
  color: #4c607a;
  font-size: 14.300px;
  box-sizing: border-box;
}

.col-name {
  padding-left: 3px;
}

.file-row {
  margin-top: 8px;
  width: 747px;
  height: 27px;
  box-sizing: border-box;
  background: #cce8ff;
  border: 1px solid #99d1ff;
  display: grid;
  grid-template-columns: 321px 180px 150px 1fr;
  align-items: center;
  font-size: 14.300px;
}

.cell-name {
  display: flex;
  align-items: center;
  gap: 4px;
  padding-left: 5px;
}

.cell {
  padding-left: 7px;
  color: #6d6d6d;
}

.cell-size {
  text-align: right;
  padding-right: 5px;
}

/* status bar */
.status {
  height: 30px;
  flex-shrink: 0;
  display: flex;
  align-items: center;
  font-size: 14px;
  color: #333;
  position: relative;
}

.st-count {
  margin-left: 17px;
}

.st-sel {
  margin-left: 27px;
}

.st-mb {
  margin-left: 10px;
}

.view-btns {
  margin-left: auto;
  display: flex;
  align-items: center;
  margin-right: 9px;
  gap: 4px;
}

.view-btn {
  width: 20px;
  height: 28px;
  display: flex;
  align-items: center;
  justify-content: center;
}

.view-on {
  width: 26px;
  background: #cce8ff;
  border: 1px solid #26a0da;
}

/* taskbar */
.taskbar {
  height: 50px;
  flex-shrink: 0;
  display: flex;
  background: #1b2a38;
  color: #fff;
}

.start {
  width: 64px;
  display: flex;
  align-items: center;
  justify-content: flex-start;
  padding-left: 19px;
  box-sizing: border-box;
}

.task-btn {
  position: relative;
  width: 62px;
  box-sizing: border-box;
  padding-right: 2px;
  display: flex;
  align-items: center;
  justify-content: center;
}

.task-on::after {
  content: "";
  position: absolute;
  left: 5px;
  right: 5px;
  bottom: 0;
  height: 3px;
  background: #76b9ed;
}

.task-active {
  background: #46545f;
}

.task-active::after {
  left: 0;
  right: 0;
}

.tray {
  margin-left: auto;
  display: flex;
  align-items: center;
}

.tr-cloud {
  margin-left: 12px;
}

.tr-ol {
  margin-left: 10px;
}

.tr-bat {
  margin-left: 9px;
}

.tr-wifi {
  margin-left: 12px;
}

.tr-vol {
  margin-left: 11px;
}

.clock {
  width: 100px;
  margin-left: 1px;
  display: flex;
  flex-direction: column;
  align-items: center;
  gap: 6px;
  font-size: 14.500px;
  color: #e8eaec;
}

.notif {
  position: relative;
  width: 20px;
  margin: 0 31px 0 11px;
}

.notif-badge {
  position: absolute;
  right: -9px;
  top: 8px;
  width: 20px;
  height: 20px;
  border-radius: 50%;
  background: #3a4650;
  border: 1px solid #8a9299;
  box-sizing: border-box;
  text-align: center;
  line-height: 18px;
  font-weight: 700;
  font-size: 13px;
}

/* context menus */
.menu {
  position: absolute;
  box-sizing: border-box;
  background: #eeeeee;
  border: 1px solid #a0a0a0;
  box-shadow: 3px 3px 3px rgba(0, 0, 0, 0.45);
  font-size: 14.300px;
  color: #1a1a1a;
}

.menu-main {
  left: 456px;
  top: 279px;
  width: 330px;
  padding: 4px 2px 5px;
}

.menu-zip {
  left: 780px;
  top: 309px;
  width: 439px;
  padding: 5px 2px;
}

.menu-item {
  display: flex;
  align-items: center;
  height: 28px;
}

.menu-bold {
  font-weight: 700;
}

.menu-hot {
  background: #fff;
}

.menu-icon {
  width: 40px;
  display: flex;
  justify-content: center;
  flex-shrink: 0;
}

.menu-chev {
  margin-left: auto;
  margin-right: 10px;
}

.menu-sep {
  height: 1px;
  background: #a0a0a0;
  margin: 4px 10px;
}
</style>
